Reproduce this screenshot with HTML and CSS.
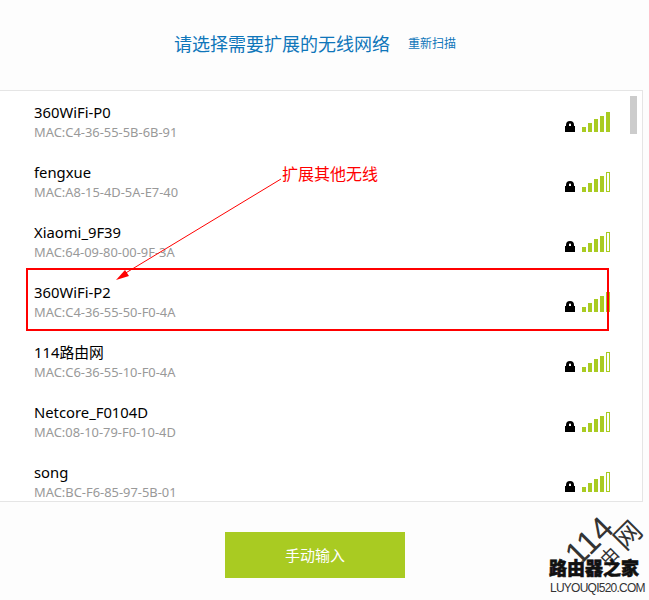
FILE: index.html
```html
<!DOCTYPE html>
<html>
  <head>
    <meta charset="utf-8" />
    <meta name="viewport" content="width=device-width, initial-scale=1" />
    <link rel="stylesheet" href="styles.css">
  </head>
  <body>
    <div class="page">
      <div class="header">
        <span class="title">请选择需要扩展的无线网络</span>
        <a class="rescan" href="#rescan">重新扫描</a>
      </div>

      <div class="list">
        <div class="row">
          <div class="info"><div class="name">360WiFi-P0</div><div class="mac">MAC:C4-36-55-5B-6B-91</div></div>
          <svg class="lock" viewBox="0 0 10 11"><path d="M1 5V4a4 4 0 0 1 8 0V5h1v6H0V5zM4 5h2V3.6a1 1 0 0 0-2 0z" fill-rule="evenodd"/></svg>
          <div class="signal"><i class="b1"></i><i class="b2"></i><i class="b3"></i><i class="b4"></i><i class="b5"></i></div>
        </div>
        <div class="row">
          <div class="info"><div class="name">fengxue</div><div class="mac">MAC:A8-15-4D-5A-E7-40</div></div>
          <svg class="lock" viewBox="0 0 10 11"><path d="M1 5V4a4 4 0 0 1 8 0V5h1v6H0V5zM4 5h2V3.6a1 1 0 0 0-2 0z" fill-rule="evenodd"/></svg>
          <div class="signal"><i class="b1"></i><i class="b2"></i><i class="b3"></i><i class="b4"></i><i class="b5 off"></i></div>
        </div>
        <div class="row">
          <div class="info"><div class="name">Xiaomi_9F39</div><div class="mac">MAC:64-09-80-00-9F-3A</div></div>
          <svg class="lock" viewBox="0 0 10 11"><path d="M1 5V4a4 4 0 0 1 8 0V5h1v6H0V5zM4 5h2V3.6a1 1 0 0 0-2 0z" fill-rule="evenodd"/></svg>
          <div class="signal"><i class="b1"></i><i class="b2"></i><i class="b3"></i><i class="b4"></i><i class="b5 off"></i></div>
        </div>
        <div class="row">
          <div class="info"><div class="name">360WiFi-P2</div><div class="mac">MAC:C4-36-55-50-F0-4A</div></div>
          <svg class="lock" viewBox="0 0 10 11"><path d="M1 5V4a4 4 0 0 1 8 0V5h1v6H0V5zM4 5h2V3.6a1 1 0 0 0-2 0z" fill-rule="evenodd"/></svg>
          <div class="signal"><i class="b1"></i><i class="b2"></i><i class="b3"></i><i class="b4"></i><i class="b5"></i></div>
        </div>
        <div class="row">
          <div class="info"><div class="name">114路由网</div><div class="mac">MAC:C6-36-55-10-F0-4A</div></div>
          <svg class="lock" viewBox="0 0 10 11"><path d="M1 5V4a4 4 0 0 1 8 0V5h1v6H0V5zM4 5h2V3.6a1 1 0 0 0-2 0z" fill-rule="evenodd"/></svg>
          <div class="signal"><i class="b1"></i><i class="b2"></i><i class="b3"></i><i class="b4"></i><i class="b5 off"></i></div>
        </div>
        <div class="row">
          <div class="info"><div class="name">Netcore_F0104D</div><div class="mac">MAC:08-10-79-F0-10-4D</div></div>
          <svg class="lock" viewBox="0 0 10 11"><path d="M1 5V4a4 4 0 0 1 8 0V5h1v6H0V5zM4 5h2V3.6a1 1 0 0 0-2 0z" fill-rule="evenodd"/></svg>
          <div class="signal"><i class="b1"></i><i class="b2"></i><i class="b3"></i><i class="b4"></i><i class="b5 off"></i></div>
        </div>
        <div class="row">
          <div class="info"><div class="name">song</div><div class="mac">MAC:BC-F6-85-97-5B-01</div></div>
          <svg class="lock" viewBox="0 0 10 11"><path d="M1 5V4a4 4 0 0 1 8 0V5h1v6H0V5zM4 5h2V3.6a1 1 0 0 0-2 0z" fill-rule="evenodd"/></svg>
          <div class="signal"><i class="b1"></i><i class="b2"></i><i class="b3"></i><i class="b4"></i><i class="b5 off"></i></div>
        </div>
        <div class="thumb"></div>
      </div>

      <div class="footer">
        <a class="button" href="#manual">手动输入</a>
      </div>

      <!-- annotations drawn on top of the screenshot -->
      <div class="highlight"></div>
      <div class="note">扩展其他无线</div>
      <svg class="arrow" viewBox="0 0 649 600">
        <line x1="281" y1="179" x2="124" y2="274" stroke="#f00" stroke-width="1"/>
        <polygon points="116,280 125,270 129,276" fill="#f00"/>
      </svg>

      <div class="mark">
        <div class="mark-num">114</div>
        <div class="mark-mid">由</div>
        <div class="mark-net">网</div>
        <div class="mark-name">路由器之家</div>
        <div class="mark-url">LUYOUQI520.COM</div>
      </div>
    </div>
  </body>
</html>
```

FILE: styles.css
```css
html,
body {
  margin: 0;
  height: 100%;
  overflow: hidden;
  background-color: #fdfdfd;
}

.page {
  position: relative;
  width: 649px;
  height: 600px;
  display: flex;
  flex-direction: column;
  font-family: "Noto Sans", "Noto Sans CJK SC", sans-serif;
}

.header {
  height: 90px;
  flex: none;
  box-sizing: border-box;
  padding: 0 0 4px 174px;
  display: flex;
  align-items: center;
}

.title {
  font-size: 18px;
  color: #0f76ba;
}

.rescan {
  margin-left: 18px;
  font-size: 12px;
  color: #0f76ba;
  text-decoration: none;
}

.list {
  position: relative;
  height: 412px;
  flex: none;
  box-sizing: border-box;
  width: 643px;
  background-color: #fff;
  border-top: 1px solid #e5e5e5;
  border-right: 1px solid #e5e5e5;
  border-bottom: 1px solid #e5e5e5;
  overflow: hidden;
}

.thumb {
  position: absolute;
  top: 5px;
  right: 5px;
  width: 7px;
  height: 38px;
  background-color: #ccc;
}

.row {
  height: 60px;
  box-sizing: border-box;
  padding: 0 32px 0 34px;
  display: flex;
  align-items: flex-end;
}

.info {
  flex: 1;
  align-self: flex-start;
  padding-top: 11px;
}

.name {
  font-size: 14.8px;
  line-height: 20px;
  margin-bottom: 1px;
  color: #000;
}

.mac {
  font-size: 12.9px;
  line-height: 18px;
  color: #999;
}

.lock {
  width: 10px;
  height: 11px;
  margin-bottom: 19px;
  margin-right: 7px;
}

.signal {
  display: flex;
  align-items: flex-end;
  gap: 2px;
  margin-bottom: 19px;
}

.signal i {
  width: 4px;
  display: block;
  box-sizing: border-box;
  background-color: #a9cb22;
}

.signal .b1 { height: 5px; }
.signal .b2 { height: 9px; }
.signal .b3 { height: 13px; }
.signal .b4 { height: 16px; }
.signal .b5 { height: 20px; }

.signal .off {
  background-color: #fff;
  border: 1px solid #a9cb22;
}

.footer {
  flex: 1;
  display: flex;
  justify-content: center;
  padding: 30px 19px 0 0;
}

.button {
  width: 180px;
  height: 46px;
  line-height: 46px;
  text-align: center;
  font-size: 15px;
  color: #fff;
  background-color: #a9cb22;
  text-decoration: none;
}

.highlight {
  position: absolute;
  left: 26px;
  top: 268px;
  width: 579px;
  height: 59px;
  border: 2px solid #f00;
}

.note {
  position: absolute;
  left: 282px;
  top: 162px;
  font-size: 16px;
  line-height: 24px;
  color: #f00;
}

.arrow {
  position: absolute;
  left: 0;
  top: 0;
  width: 649px;
  height: 600px;
}

.mark {
  position: absolute;
  left: 540px;
  top: 510px;
  width: 109px;
  height: 90px;
  color: #333;
}

.mark-num {
  position: absolute;
  left: 23px;
  top: 14px;
  font-size: 33px;
  line-height: 34px;
  font-family: "Liberation Sans", sans-serif;
  transform: rotate(-45deg);
}

.mark-mid {
  position: absolute;
  left: 60px;
  top: 35px;
  font-size: 18px;
  line-height: 22px;
  transform: rotate(-45deg);
}

.mark-net {
  position: absolute;
  left: 74px;
  top: 9px;
  font-size: 27px;
  line-height: 32px;
  transform: rotate(-45deg);
}

.mark-name {
  position: absolute;
  left: 9px;
  top: 47px;
  font-size: 18px;
  line-height: 22px;
  font-weight: 900;
  color: #111;
  white-space: nowrap;
  -webkit-text-stroke: 0.6px #111;
  text-shadow: 0 0 2px #fff;
}

.mark-url {
  position: absolute;
  left: 10px;
  top: 71px;
  font-size: 12px;
  line-height: 14px;
  font-family: "Liberation Sans", sans-serif;
  letter-spacing: -0.75px;
  white-space: nowrap;
}
```
